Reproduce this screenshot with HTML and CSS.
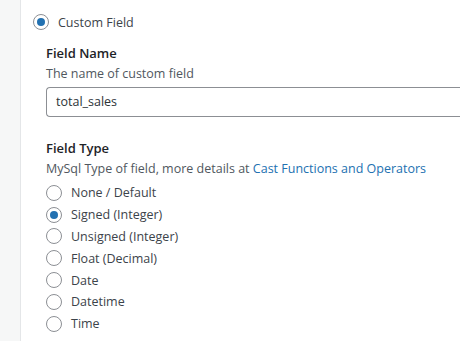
FILE: index.html
```html
<!DOCTYPE html>
<html lang="en">
<head>
    <meta charset="UTF-8">
    <title>Custom Field</title>
    <link rel="stylesheet" href="styles.css">
</head>
<body>
    <div class="side"></div>
    <div class="main">
        <label class="radio top">
            <span class="dot checked"></span>
            Custom Field
        </label>
        <div class="group">
            <div class="title">Field Name</div>
            <div class="desc">The name of custom field</div>
            <div class="input">total_sales</div>
        </div>
        <div class="group">
            <div class="title">Field Type</div>
            <div class="desc">MySql Type of field, more details at <a href="javascript:;">Cast Functions and Operators</a></div>
            <ul class="types">
                <li class="radio"><span class="dot"></span>None / Default</li>
                <li class="radio"><span class="dot checked"></span>Signed (Integer)</li>
                <li class="radio"><span class="dot"></span>Unsigned (Integer)</li>
                <li class="radio"><span class="dot"></span>Float (Decimal)</li>
                <li class="radio"><span class="dot"></span>Date</li>
                <li class="radio"><span class="dot"></span>Datetime</li>
                <li class="radio"><span class="dot"></span>Time</li>
            </ul>
        </div>
    </div>
</body>
</html>
```

FILE: styles.css
```css
*{
    margin: 0;
    padding: 0;
    box-sizing: border-box;
}
ul{
    list-style: none;
}
body{
    display: flex;
    height: 341px;
    overflow: hidden;
    font-family: "Open Sans", "Noto Sans", sans-serif;
    font-size: 12.5px;
    color: #3c434a;
    background-color: #fff;
}
.side{
    width: 21px;
    background-color: #f6f7f7;
    border-right: 1px solid #e4e6e8;
}
.main{
    flex: 1;
    padding: 11px 0 0 12px;
}
.radio{
    display: flex;
    align-items: center;
    gap: 9px;
    height: 22px;
}
.types .radio{
    height: 21.8px;
}
.top{
    margin-bottom: 10px;
}
.dot{
    width: 16px;
    height: 16px;
    border: 1px solid #8c8f94;
    border-radius: 50%;
    display: flex;
    align-items: center;
    justify-content: center;
    background-color: #fff;
}
.dot.checked::after{
    content: "";
    width: 8px;
    height: 8px;
    border-radius: 50%;
    background-color: #2271b1;
}
.group{
    padding-left: 13px;
    margin-bottom: 21px;
}
.title{
    font-weight: 600;
    color: #1d2327;
    font-size: 13px;
    line-height: 20px;
}
.desc{
    line-height: 22px;
    color: #50575e;
}
.desc a{
    color: #2271b1;
    text-decoration: none;
}
.input{
    margin-top: 2px;
    height: 30px;
    border: 1px solid #8c8f94;
    border-right: none;
    border-radius: 4px 0 0 4px;
    padding-left: 9px;
    line-height: 28px;
    color: #2c3338;
}
.types{
    margin-top: 2px;
}
```
